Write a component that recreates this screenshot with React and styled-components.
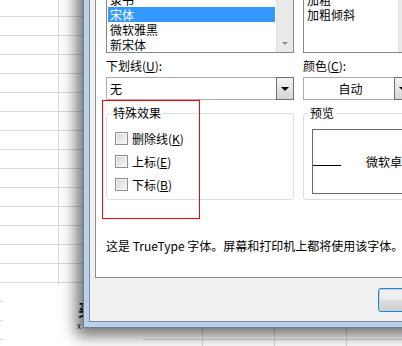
import React from 'react';
import styled, { createGlobalStyle } from 'styled-components';

const GlobalStyle = createGlobalStyle`
  *, *::before, *::after { box-sizing: border-box; }
  html, body { margin: 0; padding: 0; }
  body {
    width: 402px;
    height: 346px;
    overflow: hidden;
    background: #fff;
    font-family: "Noto Sans CJK SC", "Microsoft YaHei", sans-serif;
    font-size: 12px;
    color: #000;
  }
`;

// excel sheet behind the dialog
const Sheet = styled.div`
  position: relative;
  width: 402px;
  height: 346px;
  overflow: hidden;
  background-color: #fff;
  background-image:
    linear-gradient(to right, #d9d9d9 1px, transparent 1px),
    linear-gradient(to bottom, #d9d9d9 1px, transparent 1px);
  background-size: 72px 19px;
  background-position: 58px 16px;
`;

const SheetShape = styled.div`
  position: absolute;
  left: 3px;
  top: 285px;
  width: 140px;
  height: 70px;
  background: #fff;
`;

const ShapeText = styled.span`
  position: absolute;
  left: ${p => p.x}px;
  top: ${p => p.y}px;
  font-family: "Noto Sans CJK SC", sans-serif;
  font-size: ${p => p.size}px;
  font-weight: ${p => (p.bold ? 700 : 400)};
  line-height: 1;
  color: #111;
`;

// dialog window
const Window = styled.div`
  position: absolute;
  left: 83px;
  top: -46px;
  width: 463px;
  border: 1px solid #6d7c8e;
  background: #b9d1ea;
  padding: 5px;
  box-shadow: -4px 5px 14px 3px rgba(0, 0, 0, 0.55);
`;

const Body = styled.div`
  border: 1px solid #7f8b99;
  background: #f0f0f0;
  padding: 6px 5px 9px 5px;
`;

const TabPage = styled.div`
  border: 1px solid #898c95;
  background: #fff;
  padding: 8px 10px 23px 10px;
  display: grid;
  grid-template-columns: 188px 109px 1fr;
  column-gap: 9px;
`;

const ListBox = styled.div`
  grid-column: ${p => p.col};
  height: 77px;
  border: 1px solid #828790;
  display: flex;
  background: #fff;
  width: ${p => p.w}px;
`;

const Items = styled.div`
  flex: 1;
  padding: 0 1px;
`;

const Item = styled.div`
  height: 15px;
  line-height: 15px;
  padding-left: 2px;
  white-space: nowrap;
  background: ${p => (p.selected ? '#3399ff' : 'transparent')};
  color: ${p => (p.selected ? '#fff' : '#000')};
`;

const ScrollBar = styled.div`
  width: 17px;
  background: #eaeaea;
  border-left: 1px solid #e3e3e3;
  display: flex;
  flex-direction: column;
  justify-content: flex-end;
  align-items: center;
  padding-bottom: 7px;
`;

const SmallArrow = styled.div`
  width: 0;
  height: 0;
  border-left: 3px solid transparent;
  border-right: 3px solid transparent;
  border-top: 3px solid #8a8a8a;
`;

const Label = styled.div`
  grid-column: ${p => p.col};
  margin-top: 5px;
  height: 16px;
  line-height: 16px;
  white-space: nowrap;
`;

const Combo = styled.div`
  grid-column: ${p => p.col};
  width: ${p => p.w}px;
  margin-top: 3px;
  height: 23px;
  border: 1px solid #abadb3;
  display: flex;
  align-items: stretch;
  background: #fff;
`;

const ComboText = styled.div`
  flex: 1;
  line-height: 21px;
  padding-left: 3px;
  text-align: ${p => (p.center ? 'center' : 'left')};
`;

const DropButton = styled.div`
  width: 18px;
  margin: -1px -1px -1px 0;
  border: 1px solid #707070;
  background: linear-gradient(#f3f3f3, #e5e5e5 50%, #d6d6d6);
  display: flex;
  align-items: center;
  justify-content: center;
`;

const DropArrow = styled.div`
  width: 0;
  height: 0;
  border-left: 4px solid transparent;
  border-right: 4px solid transparent;
  border-top: 4px solid #000;
`;

const Group = styled.fieldset`
  grid-column: ${p => p.col};
  margin: 5px 0 0 0;
  padding: 0 8px ${p => p.pb}px 8px;
  border: 1px solid #d5dfe5;
  border-radius: 3px;
  min-width: 0;
`;

const Legend = styled.legend`
  padding: 0 2px;
  margin-left: -4px;
  line-height: 16px;
  height: 16px;
`;

const CheckList = styled.div`
  margin-top: 6px;
  display: flex;
  flex-direction: column;
`;

const CheckRow = styled.label`
  height: 23px;
  display: flex;
  align-items: center;
  gap: 4px;
  white-space: nowrap;
`;

const CheckBox = styled.span`
  width: 13px;
  height: 13px;
  border: 1px solid #8e8f8f;
  background: linear-gradient(135deg, #d3d6da, #f7f7f7);
  box-shadow: inset 0 0 0 1px #f4f4f4;
  flex: none;
`;

const PreviewBox = styled.div`
  position: relative;
  margin-top: 8px;
  height: 65px;
  border: 1px solid #696969;
  display: flex;
  align-items: center;
  justify-content: center;
  white-space: nowrap;
`;

const Baseline = styled.div`
  position: absolute;
  left: 0;
  top: 35px;
  width: 28px;
  height: 1px;
  background: #000;
`;

const Info = styled.div`
  grid-column: 1 / -1;
  margin-top: 38px;
  line-height: 16px;
  white-space: nowrap;
`;

const ButtonRow = styled.div`
  margin-top: 10px;
  display: flex;
  justify-content: flex-end;
  gap: 6px;
`;

const Button = styled.div`
  width: 75px;
  height: 24px;
  line-height: 22px;
  text-align: center;
  border: 1px solid ${p => (p.primary ? '#3c7fb1' : '#707070')};
  border-radius: 3px;
  background: linear-gradient(#f2f2f2, #ebebeb 50%, #dddddd 51%, #cfcfcf);
  box-shadow: ${p => (p.primary ? 'inset 0 0 0 1px #a8dbf7' : 'inset 0 0 0 1px #fcfcfc')};
`;

// red annotation rectangle drawn on the screenshot
const Highlight = styled.div`
  position: absolute;
  left: 102px;
  top: 100px;
  width: 98px;
  height: 119px;
  border: 1px solid #ff0000;
`;

const fonts = ['楷体', '隶书', '宋体', '微软雅黑', '新宋体'];
const styles = ['倾斜', '加粗', '加粗倾斜'];
const effects = [
  ['删除线', 'K'],
  ['上标', 'E'],
  ['下标', 'B'],
];

export default function App() {
  return (
    <>
      <GlobalStyle />
      <Sheet>
        <SheetShape>
          <ShapeText x={75} y={16} size={16} bold>买</ShapeText>
          <ShapeText x={74} y={37} size={8}>x</ShapeText>
        </SheetShape>
        <Window>
          <Body>
            <TabPage>
              <ListBox col={1} w={188}>
                <Items>
                  {fonts.map(f => (
                    <Item key={f} selected={f === '宋体'}>{f}</Item>
                  ))}
                </Items>
                <ScrollBar><SmallArrow /></ScrollBar>
              </ListBox>
              <ListBox col={2} w={113}>
                <Items>
                  {styles.map(s => (
                    <Item key={s}>{s}</Item>
                  ))}
                </Items>
                <ScrollBar><SmallArrow /></ScrollBar>
              </ListBox>

              <Label col={1}>下划线(<u>U</u>):</Label>
              <Label col={2}>颜色(<u>C</u>):</Label>

              <Combo col={1} w={188}>
                <ComboText>无</ComboText>
                <DropButton><DropArrow /></DropButton>
              </Combo>
              <Combo col={2} w={109}>
                <ComboText center>自动</ComboText>
                <DropButton><DropArrow /></DropButton>
              </Combo>

              <Group col={1} pb={3}>
                <Legend>特殊效果</Legend>
                <CheckList>
                  {effects.map(([t, k]) => (
                    <CheckRow key={k}>
                      <CheckBox />
                      <span>{t}(<u>{k}</u>)</span>
                    </CheckRow>
                  ))}
                </CheckList>
              </Group>
              <Group col="2 / 4" pb={5}>
                <Legend>预览</Legend>
                <PreviewBox>
                  <Baseline />
                  微软卓越 AaBbCc
                </PreviewBox>
              </Group>

              <Info>这是 TrueType 字体。屏幕和打印机上都将使用该字体。</Info>
            </TabPage>
            <ButtonRow>
              <Button primary>确定</Button>
              <Button>取消</Button>
            </ButtonRow>
          </Body>
        </Window>
        <Highlight />
      </Sheet>
    </>
  );
}
